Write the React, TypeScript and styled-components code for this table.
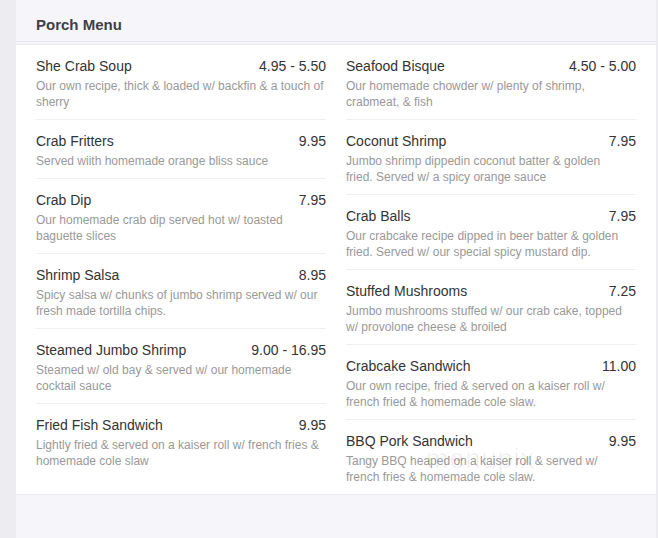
import React from "react";
import styled, { createGlobalStyle } from "styled-components";

const Global = createGlobalStyle`
  html, body {
    margin: 0;
    padding: 0;
    background: #ececf1;
    font-family: "Liberation Sans", Arial, sans-serif;
  }
`;

const Page = styled.div`
  padding: 0 2px 0 16px;
  min-height: 538px;
  box-sizing: border-box;
  display: flex;
`;

const Panel = styled.section`
  flex: 1;
  background: #f6f6fa;
  min-height: 538px;
  display: flex;
  flex-direction: column;
`;

const Header = styled.header`
  height: 42px;
  box-sizing: border-box;
  padding: 7px 20px 0;
  display: flex;
  align-items: center;
  border-bottom: 1px solid #e6e6ee;
`;

const Title = styled.h2`
  margin: 0;
  font-size: 15px;
  font-weight: bold;
  color: #3f3f46;
`;

const Body = styled.div`
  position: relative;
  margin-top: 2px;
  border-top: 1px solid #ebebf1;
  border-bottom: 1px solid #ebebf1;
  background: #fff;
  padding: 0 20px;
  display: grid;
  grid-template-columns: 1fr 1fr;
  column-gap: 20px;
  align-items: start;
`;

const Column = styled.div`
  display: flex;
  flex-direction: column;
`;

const Item = styled.div<{ $last?: boolean }>`
  padding: 11px 0 9px;
  border-bottom: ${(p) => (p.$last ? "none" : "1px solid #efeff3")};
`;

const Row = styled.div`
  display: flex;
  justify-content: space-between;
  align-items: baseline;
  font-size: 14px;
  line-height: 21px;
  color: #333;
`;

const Name = styled.span``;
const Price = styled.span``;

const Desc = styled.p`
  margin: 0;
  padding-top: 1px;
  font-size: 12px;
  line-height: 16px;
  color: #999;
`;

const DescLine = styled.span`
  display: block;
  white-space: nowrap;
`;

const Watermark = styled.div`
  position: absolute;
  left: 410px;
  top: 399px;
  font-size: 27px;
  letter-spacing: 1px;
  color: rgba(0, 0, 0, 0.06);
  pointer-events: none;
`;

type MenuItem = { name: string; price: string; desc: string[] };

const left: MenuItem[] = [
  { name: "She Crab Soup", price: "4.95 - 5.50", desc: ["Our own recipe, thick & loaded w/ backfin & a touch of", "sherry"] },
  { name: "Crab Fritters", price: "9.95", desc: ["Served wiith homemade orange bliss sauce"] },
  { name: "Crab Dip", price: "7.95", desc: ["Our homemade crab dip served hot w/ toasted", "baguette slices"] },
  { name: "Shrimp Salsa", price: "8.95", desc: ["Spicy salsa w/ chunks of jumbo shrimp served w/ our", "fresh made tortilla chips."] },
  { name: "Steamed Jumbo Shrimp", price: "9.00 - 16.95", desc: ["Steamed w/ old bay & served w/ our homemade", "cocktail sauce"] },
  { name: "Fried Fish Sandwich", price: "9.95", desc: ["Lightly fried & served on a kaiser roll w/ french fries &", "homemade cole slaw"] },
];

const right: MenuItem[] = [
  { name: "Seafood Bisque", price: "4.50 - 5.00", desc: ["Our homemade chowder w/ plenty of shrimp,", "crabmeat, & fish"] },
  { name: "Coconut Shrimp", price: "7.95", desc: ["Jumbo shrimp dippedin coconut batter & golden", "fried. Served w/ a spicy orange sauce"] },
  { name: "Crab Balls", price: "7.95", desc: ["Our crabcake recipe dipped in beer batter & golden", "fried. Served w/ our special spicy mustard dip."] },
  { name: "Stuffed Mushrooms", price: "7.25", desc: ["Jumbo mushrooms stuffed w/ our crab cake, topped", "w/ provolone cheese & broiled"] },
  { name: "Crabcake Sandwich", price: "11.00", desc: ["Our own recipe, fried & served on a kaiser roll w/", "french fried & homemade cole slaw."] },
  { name: "BBQ Pork Sandwich", price: "9.95", desc: ["Tangy BBQ heaped on a kaiser roll & served w/", "french fries & homemade cole slaw."] },
];

const MenuColumn = ({ items }: { items: MenuItem[] }) => (
  <Column>
    {items.map((it, i) => (
      <Item key={it.name} $last={i === items.length - 1}>
        <Row>
          <Name>{it.name}</Name>
          <Price>{it.price}</Price>
        </Row>
        <Desc>
          {it.desc.map((line) => (
            <DescLine key={line}>{line}</DescLine>
          ))}
        </Desc>
      </Item>
    ))}
  </Column>
);

export default function App() {
  return (
    <>
      <Global />
      <Page>
        <Panel>
          <Header>
            <Title>Porch Menu</Title>
          </Header>
          <Body>
            <MenuColumn items={left} />
            <MenuColumn items={right} />
            <Watermark>menupix</Watermark>
          </Body>
        </Panel>
      </Page>
    </>
  );
}
